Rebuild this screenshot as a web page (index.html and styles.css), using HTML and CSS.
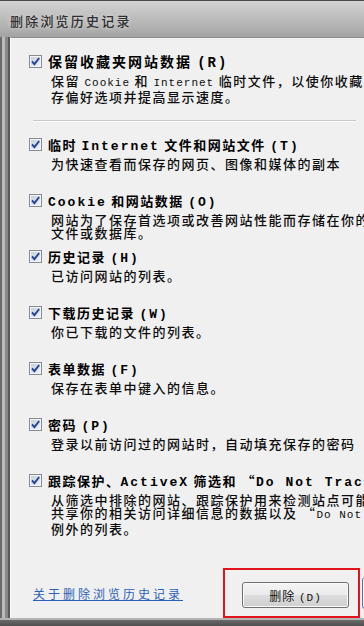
FILE: index.html
```html
<!DOCTYPE html>
<html lang="zh-CN">
<head>
<meta charset="utf-8">
<title>删除浏览历史记录</title>
<link rel="stylesheet" href="styles.css">
</head>
<body>
<div class="window">
  <div class="titlebar"><span class="wtitle">删除浏览历史记录</span></div>
  <div class="frame">
    <div class="content">
      <div class="item">
        <span class="cb"><svg viewBox="0 0 11 11" width="11" height="11"><path d="M2 5.4 L4.4 8.2 L9.2 2" /></svg></span>
        <div class="title big">保留收藏夹网站数据 <span class="en">(R)</span></div>
        <div class="desc">保留 <span class="en">Cookie</span> 和 <span class="en">Internet</span> 临时文件，以使你收藏的网站能够保<br>存偏好选项并提高显示速度。</div>
      </div>
      <div class="sep"></div>
      <div class="list">
        <div class="item">
          <span class="cb"><svg viewBox="0 0 11 11" width="11" height="11"><path d="M2 5.4 L4.4 8.2 L9.2 2" /></svg></span>
          <div class="title">临时 <span class="en">Internet</span> 文件和网站文件 <span class="en">(T)</span></div>
          <div class="desc">为快速查看而保存的网页、图像和媒体的副本</div>
        </div>
        <div class="item">
          <span class="cb"><svg viewBox="0 0 11 11" width="11" height="11"><path d="M2 5.4 L4.4 8.2 L9.2 2" /></svg></span>
          <div class="title"><span class="en">Cookie</span> 和网站数据 <span class="en">(O)</span></div>
          <div class="desc">网站为了保存首选项或改善网站性能而存储在你的计算机上的<br>文件或数据库。</div>
        </div>
        <div class="item">
          <span class="cb"><svg viewBox="0 0 11 11" width="11" height="11"><path d="M2 5.4 L4.4 8.2 L9.2 2" /></svg></span>
          <div class="title">历史记录 <span class="en">(H)</span></div>
          <div class="desc">已访问网站的列表。</div>
        </div>
        <div class="item">
          <span class="cb"><svg viewBox="0 0 11 11" width="11" height="11"><path d="M2 5.4 L4.4 8.2 L9.2 2" /></svg></span>
          <div class="title">下载历史记录 <span class="en">(W)</span></div>
          <div class="desc">你已下载的文件的列表。</div>
        </div>
        <div class="item">
          <span class="cb"><svg viewBox="0 0 11 11" width="11" height="11"><path d="M2 5.4 L4.4 8.2 L9.2 2" /></svg></span>
          <div class="title">表单数据 <span class="en">(F)</span></div>
          <div class="desc">保存在表单中键入的信息。</div>
        </div>
        <div class="item">
          <span class="cb"><svg viewBox="0 0 11 11" width="11" height="11"><path d="M2 5.4 L4.4 8.2 L9.2 2" /></svg></span>
          <div class="title">密码 <span class="en">(P)</span></div>
          <div class="desc">登录以前访问过的网站时，自动填充保存的密码</div>
        </div>
        <div class="item">
          <span class="cb"><svg viewBox="0 0 11 11" width="11" height="11"><path d="M2 5.4 L4.4 8.2 L9.2 2" /></svg></span>
          <div class="title">跟踪保护、<span class="en">ActiveX</span> 筛选和 “<span class="en">Do Not Track</span>”</div>
          <div class="desc">从筛选中排除的网站、跟踪保护用来检测站点可能在何处自动<br>共享你的相关访问详细信息的数据以及 “<span class="en">Do Not Track</span>” 请求的<br>例外的列表。</div>
        </div>
      </div>
      <div class="footer">
        <a class="link" href="#">关于删除浏览历史记录</a>
        <div class="mark"><button class="btn" type="button">删除 <span class="en">(D)</span></button></div>
        <button class="btn cancel" type="button">取消</button>
      </div>
    </div>
  </div>
  <div class="bottom"></div>
</div>
</body>
</html>
```

FILE: styles.css
```css
html, body {
  margin: 0;
  padding: 0;
}

body {
  width: 364px;
  height: 626px;
  overflow: hidden;
  background: #f0f0f0;
  font-family: "Noto Sans CJK SC", sans-serif;
}

.window {
  display: flex;
  flex-direction: column;
  height: 626px;
}

.titlebar {
  flex: none;
  height: 37px;
  box-sizing: border-box;
  border-top: 1px solid #4a4a4a;
  padding: 13px 0 0 10px;
  background: linear-gradient(#d4d4d4 0, #c2c2c2 35%, #b0b0b0 75%, #a2a2a2 100%);
}

.wtitle {
  display: block;
  font-size: 13px;
  line-height: 13px;
  letter-spacing: 2.2px;
  font-weight: 500;
  color: #2e2e2e;
  white-space: nowrap;
  text-shadow: 0 0 5px rgba(255, 255, 255, 0.6);
}

.frame {
  flex: 1;
  min-height: 0;
  display: flex;
  padding-left: 10px;
  background: linear-gradient(to right, #6a6a6a 0 2px, #bcbcbc 2px 5px, #888888 5px 8px, #5a5a5a 8px 10px);
}

.content {
  flex: 1;
  min-width: 0;
  overflow: hidden;
  background: #f0f0f0;
  border-top: 1px solid #8c8c8c;
  border-left: 1px solid #fafafa;
  padding: 17px 0 0 18px;
}

.item {
  display: grid;
  grid-template-columns: 13px auto;
  column-gap: 6px;
  align-content: start;
  white-space: nowrap;
}

.cb {
  grid-row: 1;
  grid-column: 1;
  display: block;
  width: 13px;
  height: 13px;
  box-sizing: border-box;
  border: 1px solid #858b92;
  box-shadow: inset 0 0 0 1px #f6f6f6;
  background: linear-gradient(135deg, #c3ccd8, #f2f5f8);
}

.cb svg {
  display: block;
}

.cb path {
  fill: none;
  stroke: #22449a;
  stroke-width: 1.9;
}

.title {
  grid-row: 1;
  grid-column: 2;
  font-size: 13px;
  line-height: 13px;
  font-weight: 700;
  letter-spacing: 1.5px;
  color: #000;
}

.title.big {
  font-size: 14px;
  letter-spacing: 2px;
}

.desc {
  grid-row: 2;
  grid-column: 2;
  margin: 4px 0 0 3px;
  font-size: 13px;
  line-height: 13px;
  font-weight: 500;
  letter-spacing: 1.5px;
  color: #0c0c0c;
}

.en {
  font-family: "Liberation Mono", monospace;
}

.title .en {
  letter-spacing: 2px;
}

.desc .en {
  font-size: 11px;
  letter-spacing: 1px;
}

.sep {
  height: 0;
  border-top: 1px solid #c8c8c8;
  border-bottom: 1px solid #ffffff;
  margin: 17px 8px 16px 4px;
}

.list {
  display: flex;
  flex-direction: column;
}

.list .item {
  height: 56px;
}

.footer {
  display: flex;
  align-items: center;
  margin: 38px 0 0 4px;
}

.link {
  flex: 0 0 190px;
  font-size: 12px;
  line-height: 13px;
  letter-spacing: 3px;
  color: #2c5fb8;
  text-decoration: underline;
  white-space: nowrap;
}

.mark {
  flex: none;
  border: 2px solid #e3131b;
  padding: 12px 9px 8px 17px;
}

.btn {
  display: block;
  width: 107px;
  height: 26px;
  box-sizing: border-box;
  padding: 0;
  border: 1px solid #707070;
  border-radius: 3px;
  background: linear-gradient(#f4f4f4 0, #ebebeb 50%, #dddddd 51%, #cfcfcf 100%);
  box-shadow: inset 0 0 0 1px #fbfbfb;
  font-family: "Noto Sans CJK SC", sans-serif;
  font-size: 12px;
  letter-spacing: 1px;
  color: #111;
}

.btn .en {
  font-size: 11px;
}

.cancel {
  flex: none;
  width: 80px;
  height: 32px;
  margin-left: 2px;
  border-color: #3c7fb1;
}

.bottom {
  flex: none;
  height: 8px;
  background: linear-gradient(#b4b4b4 0 2px, #6a6a6a 2px, #4e4e4e 100%);
}
```
